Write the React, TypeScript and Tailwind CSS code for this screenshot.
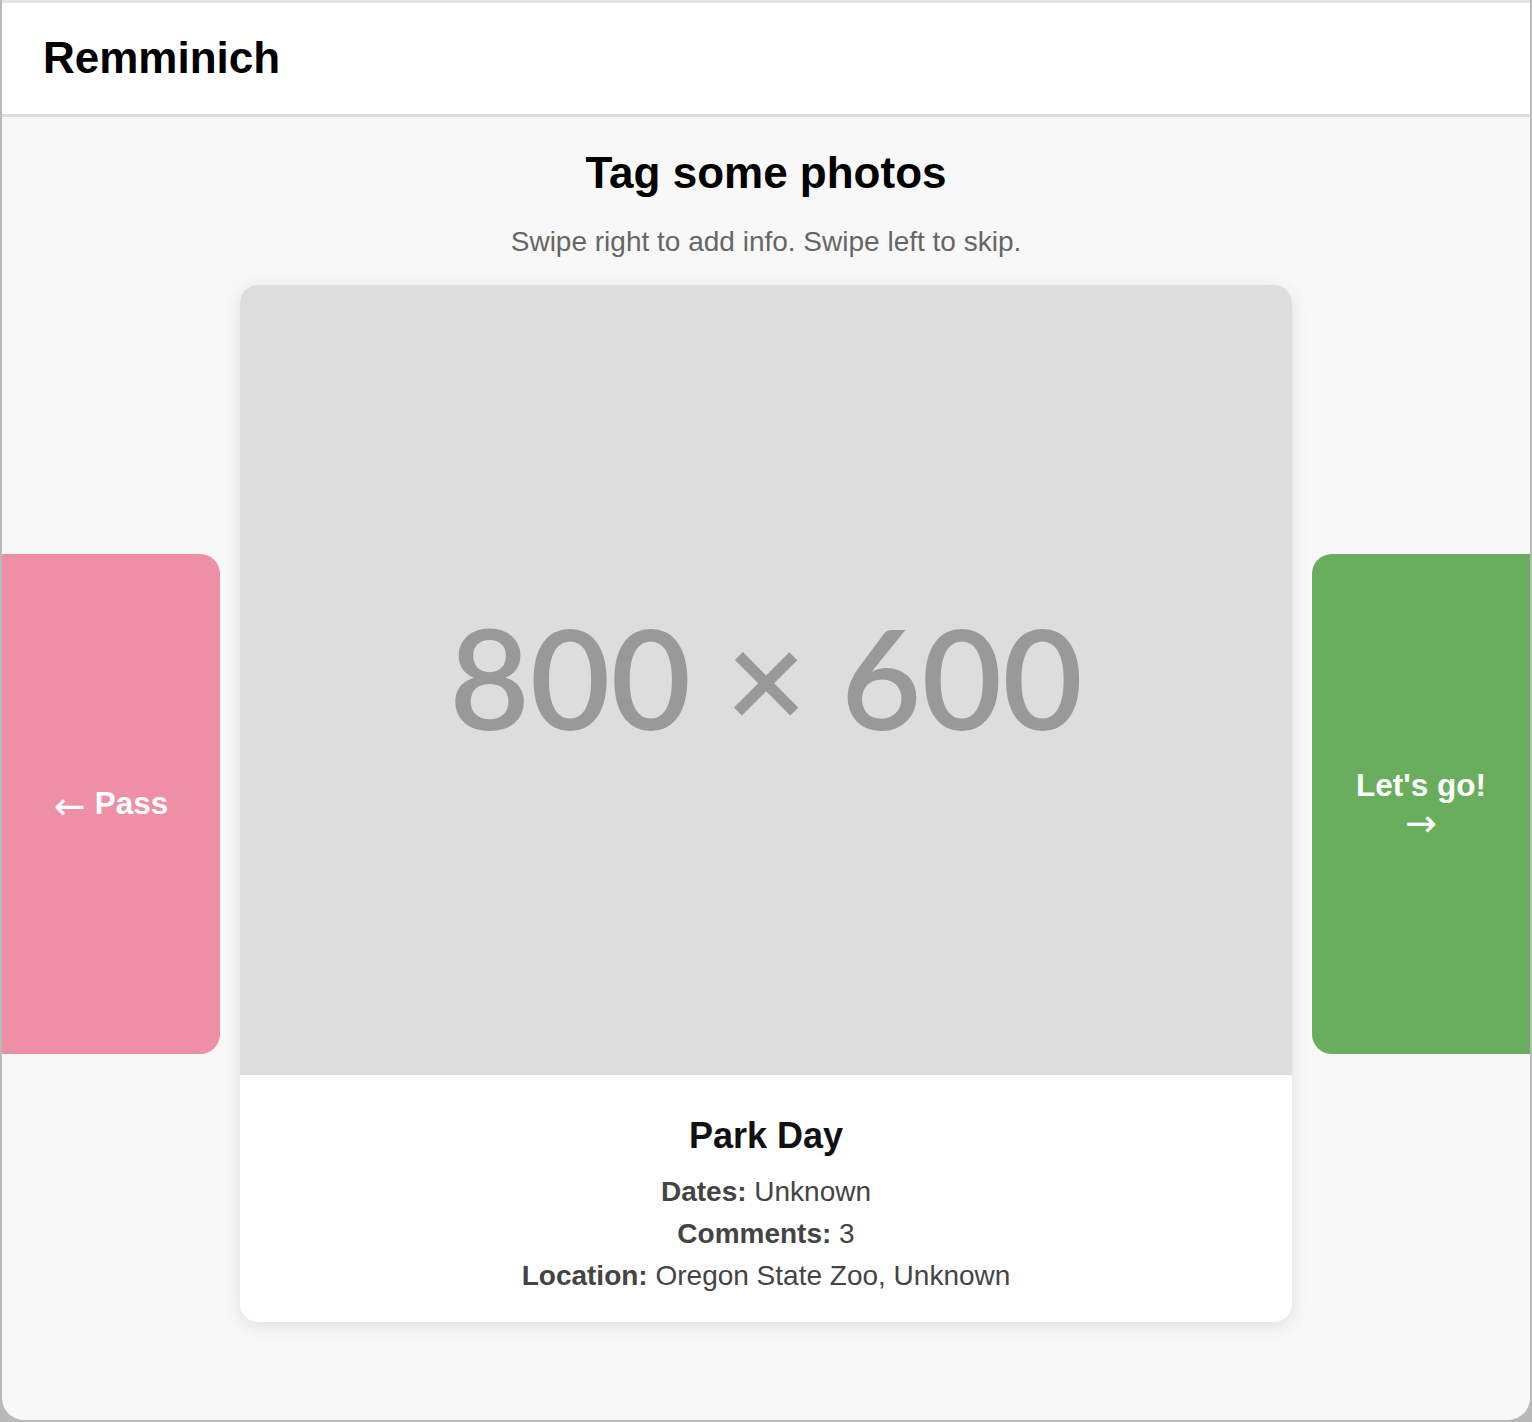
import React from "react";

export default function App() {
  return (
    <div className="w-[1532px] h-[1422px] bg-[#b9b9b9] flex overflow-hidden">
      <div
        className="ml-[2px] w-[1528px] h-[1420px] rounded-b-[22px] overflow-hidden bg-[#f8f8f8] flex flex-col border-t-[3px] border-[#e3e5ec]"
        style={{ fontFamily: '"Liberation Sans", Arial, sans-serif' }}
      >
        <header className="bg-white h-[114px] border-b-[3px] border-[#dddddd] flex items-center pl-[41px] shrink-0">
          <h1 className="text-[44px] font-bold text-black leading-[1.15]">Remminich</h1>
        </header>

        <main className="flex flex-col items-center pt-[32px]">
          <h2 className="text-[44px] font-bold text-black leading-[48px]">Tag some photos</h2>
          <p className="mt-[29px] text-[28px] leading-[31px] text-[#666666]">
            Swipe right to add info. Swipe left to skip.
          </p>

          <div className="mt-[28px] w-full flex items-center justify-between">
            <button className="w-[218px] h-[500px] bg-[#ee8fa6] rounded-r-[20px] text-white font-bold text-[31.5px] flex items-center justify-center">
              <span className="flex items-center">
                <span
                  className="font-normal text-[38px] leading-none mr-[9px] mt-[4px]"
                  style={{ fontFamily: '"DejaVu Sans", sans-serif' }}
                >
                  ←
                </span>
                <span>Pass</span>
              </span>
            </button>

            <div className="w-[1052px] bg-white rounded-[18px] overflow-hidden shadow-[0_4px_18px_rgba(0,0,0,0.10)]">
              <div className="w-[1052px] h-[790px] bg-[#dddddd] flex items-center justify-center pb-[8px]">
                <span
                  className="text-[139px] text-[#999999] leading-none"
                  style={{ fontFamily: 'Lato, "Open Sans", sans-serif', fontWeight: 600 }}
                >
                  800 × 600
                </span>
              </div>
              <div className="flex flex-col items-center pt-[40px] pb-[25px]">
                <h3 className="text-[36px] font-bold text-[#111111] leading-[42px]">Park Day</h3>
                <div className="mt-[14px] flex flex-col items-center text-[28px] leading-[42px] text-[#444444]">
                  <p>
                    <span className="font-bold">Dates:</span> Unknown
                  </p>
                  <p>
                    <span className="font-bold">Comments:</span> 3
                  </p>
                  <p>
                    <span className="font-bold">Location:</span> Oregon State Zoo, Unknown
                  </p>
                </div>
              </div>
            </div>

            <button className="w-[218px] h-[500px] bg-[#68ae5d] rounded-l-[20px] text-white font-bold text-[31.5px] flex flex-col items-center justify-center leading-[38px]">
              <span>Let's go!</span>
              <span
                className="font-normal text-[38px]"
                style={{ fontFamily: '"DejaVu Sans", sans-serif' }}
              >
                →
              </span>
            </button>
          </div>
        </main>
      </div>
    </div>
  );
}
